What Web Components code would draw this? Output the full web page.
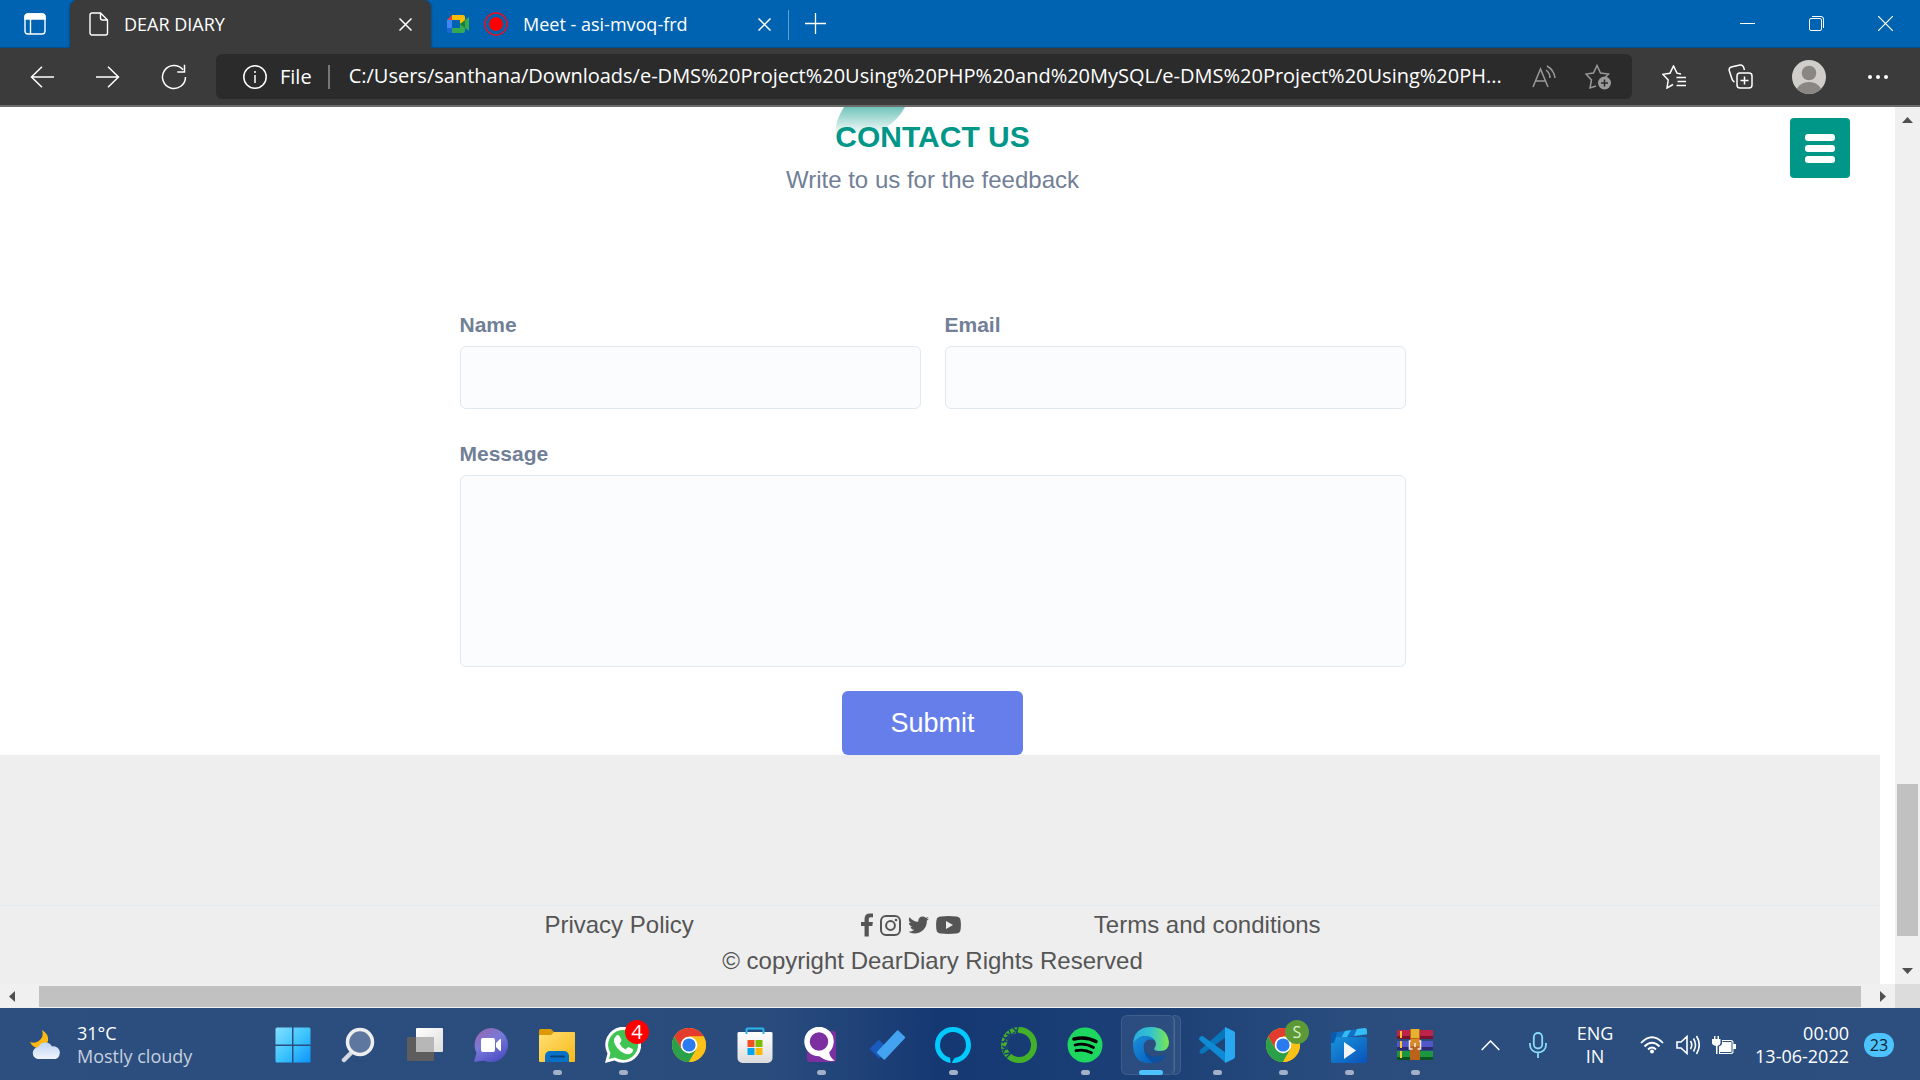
<!DOCTYPE html>
<html lang="en">
<head>
<meta charset="utf-8">
<meta name="viewport" content="width=device-width, initial-scale=1">
<title>DEAR DIARY</title>
<style>
  body {
    margin: 0;
    height: 100vh;
    display: flex;
    flex-direction: column;
    overflow: hidden;
    font-family: "Open Sans", "Noto Sans", sans-serif;
  }
  diary-page {
    flex: 1;
    min-height: 0;
  }
</style>
</head>
<body>
  <tab-strip>
    <browser-tab active label="DEAR DIARY">
      <svg slot="icon" width="20" height="24" viewBox="0 0 20 24" fill="none" stroke="#fff" stroke-width="1.4"><path d="M3 1h8.500l7 7v13a2 2 0 0 1-2 2H3a2 2 0 0 1-2-2V3a2 2 0 0 1 2-2zM11.500 1v5a2 2 0 0 0 2 2h5"/></svg>
    </browser-tab>
    <browser-tab label="Meet - asi-mvoq-frd">
      <svg slot="icon" width="22" height="18" viewBox="0 0 22 18"><path fill="#ea4335" d="M0 5l5-5v5z"/><path fill="#4285f4" d="M0 5h5v8H0z"/><path fill="#1967d2" d="M0 13h5v5H2a2 2 0 0 1-2-2z"/><path fill="#fbbc04" d="M5 0h11a2 2 0 0 1 2 2v5l-5 3V5H5z"/><path fill="#34a853" d="M5 13h8V8l5 3v5a2 2 0 0 1-2 2H5zM18 5l4-3v14l-4-3z"/><path fill="#188038" d="M13 9l5-4v8z"/></svg>
      <svg slot="icon" width="24" height="24" viewBox="0 0 24 24"><circle cx="12" cy="12" r="11" fill="none" stroke="#e8101c" stroke-width="1.500"/><circle cx="12" cy="12" r="7" fill="#f00"/></svg>
    </browser-tab>
  </tab-strip>
  <browser-toolbar></browser-toolbar>
  <diary-page>
    <contact-form></contact-form>
    <site-footer slot="footer">© copyright DearDiary Rights Reserved</site-footer>
  </diary-page>
  <task-bar>
    <task-app name="start"></task-app>
    <task-app name="search"></task-app>
    <task-app name="taskview"></task-app>
    <task-app name="chat"></task-app>
    <task-app name="explorer" running></task-app>
    <task-app name="whatsapp" running badge="4"></task-app>
    <task-app name="chrome"></task-app>
    <task-app name="store"></task-app>
    <task-app name="quora" running></task-app>
    <task-app name="todo"></task-app>
    <task-app name="alexa" running></task-app>
    <task-app name="anaconda"></task-app>
    <task-app name="spotify" running></task-app>
    <task-app name="edge" running focused></task-app>
    <task-app name="vscode" running></task-app>
    <task-app name="chrome" running profile="S"></task-app>
    <task-app name="movies" running></task-app>
    <task-app name="winrar" running></task-app>
  </task-bar>

<script>
class TabStrip extends HTMLElement {
  constructor() {
    super();
    this.attachShadow({ mode: "open" }).innerHTML = `
    <style>
      :host {
        display: flex;
        height: 48px;
        flex-shrink: 0;
        background: #0063b1;
        box-shadow: inset 0 -1px 1px #00508f;
      }
      button {
        border: 0;
        padding: 0;
        background: none;
        display: flex;
        align-items: center;
        justify-content: center;
      }
      .menu { width: 70px; }
      .divider {
        width: 1px;
        height: 30px;
        margin-top: 10px;
        background: #5fa0d4;
      }
      .add { width: 53px; height: 46px; }
      .window { display: flex; margin-left: auto; }
      .window button { width: 69px; height: 46px; }
    </style>
    <button class="menu" aria-label="Tab actions">
      <svg width="22" height="22" viewBox="0 0 22 22" fill="none" stroke="#fff" stroke-width="1.400"><rect x="1" y="1" width="20" height="20" rx="3"/><path d="M6.500 6v15"/><path fill="#fff" d="M1 6V4a3 3 0 0 1 3-3h14a3 3 0 0 1 3 3v2z"/></svg>
    </button>
    <slot></slot>
    <span class="divider"></span>
    <button class="add" aria-label="New tab">
      <svg width="21" height="21" viewBox="0 0 21 21" stroke="#fff" stroke-width="1.300"><path d="M10.500 0v21M0 10.500h21"/></svg>
    </button>
    <div class="window">
      <button aria-label="Minimize"><svg width="15" height="15" viewBox="0 0 15 15" stroke="#fff"><path d="M0 7.500h15"/></svg></button>
      <button aria-label="Restore"><svg width="15" height="15" viewBox="0 0 15 15" fill="none" stroke="#fff"><rect x=".5" y="2.500" width="12" height="12" rx="1.500"/><path d="M3 .5h9a2.500 2.500 0 0 1 2.500 2.500v9"/></svg></button>
      <button aria-label="Close"><svg width="15" height="15" viewBox="0 0 15 15" stroke="#fff" stroke-width="1.200"><path d="M0 0l15 15M15 0L0 15"/></svg></button>
    </div>`;
  }
}
customElements.define("tab-strip", TabStrip);

class BrowserTab extends HTMLElement {
  constructor() {
    super();
    this.attachShadow({ mode: "open" });
  }

  connectedCallback() {
    this.shadowRoot.innerHTML = `
    <style>
      :host {
        display: flex;
        align-items: center;
        gap: 15px;
        box-sizing: border-box;
        width: 357px;
        padding: 0 15px 0 16px;
        color: #fff;
        font-size: 18px;
      }
      :host([active]) {
        width: 361px;
        padding: 0 17px 0 19px;
        background: #3b3b3b;
        border-radius: 8px 8px 0 0;
        box-shadow: 0 0 3px #003c6e;
      }
      .title {
        flex: 1;
        white-space: nowrap;
        line-height: 24px;
      }
      button {
        border: 0;
        padding: 5px 2px;
        background: none;
        display: flex;
      }
    </style>
    <slot name="icon"></slot>
    <span class="title">${this.getAttribute("label")}</span>
    <button aria-label="Close tab">
      <svg width="13" height="13" viewBox="0 0 13 13" stroke="#fff" stroke-width="1.500"><path d="M.5.5l12 12M12.500.5l-12 12"/></svg>
    </button>`;
  }
}
customElements.define("browser-tab", BrowserTab);

class BrowserToolbar extends HTMLElement {
  constructor() {
    super();
    this.attachShadow({ mode: "open" }).innerHTML = `
    <style>
      :host {
        display: flex;
        align-items: center;
        height: 57px;
        flex-shrink: 0;
        padding: 0 9px;
        background: #3b3b3b;
        border-bottom: 2px solid #6b6b6b;
        color: #fff;
        font-size: 20px;
      }
      button {
        border: 0;
        padding: 0;
        width: 66px;
        height: 45px;
        background: none;
        display: flex;
        align-items: center;
        justify-content: center;
      }
      .profile { width: 72px; }
      .address {
        flex: 1;
        height: 45px;
        margin: 0 9px;
        display: flex;
        align-items: center;
        background: #2b2b2b;
        border-radius: 6px;
        padding-left: 27px;
        padding-right: 7px;
      }
      .address button { width: 54px; }
      .address .site {
        width: auto;
        gap: 13px;
        color: inherit;
        font: inherit;
      }
      .divider {
        width: 2px;
        height: 24px;
        margin: 0 19px 0 16px;
        background: #777;
      }
      input {
        flex: 1;
        min-width: 0;
        border: 0;
        padding: 0 0 2px;
        outline: 0;
        background: none;
        color: inherit;
        font: inherit;
      }
    </style>
    <button aria-label="Back"><svg width="24" height="22" viewBox="0 0 24 22" fill="none" stroke="#fff" stroke-width="1.500"><path d="M12 .7L1.500 11 12 21.300M1.500 11H24"/></svg></button>
    <button aria-label="Forward"><svg width="24" height="22" viewBox="0 0 24 22" fill="none" stroke="#fff" stroke-width="1.500"><path d="M12 .7L22.500 11 12 21.300M22.500 11H0"/></svg></button>
    <button aria-label="Refresh"><svg width="26" height="26" viewBox="0 0 26 26" fill="none" stroke="#fff" stroke-width="1.500"><path d="M24.500 13A11.500 11.500 0 1 1 22 5.800M23.500.8V8h-7.200"/></svg></button>
    <div class="address">
      <button class="site"><svg width="24" height="24" viewBox="0 0 24 24" fill="none" stroke="#fff" stroke-width="1.500"><circle cx="12" cy="12" r="11.200"/><path d="M12 10v8M12 6v2"/></svg>File</button>
      <span class="divider"></span>
      <input aria-label="Address" value="C:/Users/santhana/Downloads/e-DMS%20Project%20Using%20PHP%20and%20MySQL/e-DMS%20Project%20Using%20PH...">
      <button aria-label="Read aloud"><svg width="24" height="24" viewBox="0 0 24 24" fill="none" stroke="#9a9a9a" stroke-width="1.500"><path d="M1 22L8.500 4 16 22M3.700 16h9.600M14 5q4 3 4 8M15 1q7 4 8 12"/></svg></button>
      <button aria-label="Add to favorites"><svg width="26" height="26" viewBox="0 0 26 26" fill="none" stroke="#9a9a9a" stroke-width="1.500"><path d="M11 22l-6 2 1.500-8L1 10l7.500-1L12 1.500 15.500 9l8 1-3 3"/><circle cx="19.500" cy="19" r="6.500" fill="#9a9a9a" stroke="none"/><path stroke="#2b2b2b" d="M19.500 15.500v7M16 19h7"/></svg></button>
    </div>
    <button aria-label="Favorites"><svg width="24" height="24" viewBox="0 0 24 24" fill="none" stroke="#fff" stroke-width="1.500"><path d="M11 19.500l-6 3.500 1.200-8L.8 9.300 8 8.200 11.500 1 15 8.200l4 .8M14.500 12.500H24M15.500 16.500H24M14.500 20.500H24" /></svg></button>
    <button aria-label="Collections"><svg width="25" height="25" viewBox="0 0 25 25" fill="none" stroke="#fff" stroke-width="1.500"><rect x="9" y="9" width="15" height="15" rx="3"/><path d="M16.500 12.500v8M12.500 16.500h8M6.500 18Q4.500 17 4 15L1.200 6.500a3 3 0 0 1 2-3.500L12 1a3 3 0 0 1 3.500 2l1 3"/></svg></button>
    <button class="profile" aria-label="Profile"><svg width="34" height="34" viewBox="0 0 34 34"><defs><clipPath id="face"><circle cx="17" cy="17" r="17"/></clipPath></defs><g clip-path="url(#face)"><path fill="#d0cecb" d="M0 0h34v34H0z"/><circle cx="17" cy="13" r="7.300" fill="#8a8683"/><ellipse cx="17" cy="33" rx="13" ry="11" fill="#8a8683"/></g></svg></button>
    <button aria-label="Settings and more"><svg width="20" height="4" viewBox="0 0 20 4" fill="#fff"><circle cx="2" cy="2" r="2"/><circle cx="10" cy="2" r="2"/><circle cx="18" cy="2" r="2"/></svg></button>`;
  }
}
customElements.define("browser-toolbar", BrowserToolbar);

// scrolled viewport with both scrollbars
class DiaryPage extends HTMLElement {
  constructor() {
    super();
    this.attachShadow({ mode: "open" }).innerHTML = `
    <style>
      :host {
        display: grid;
        grid-template-columns: 1fr 25px;
        grid-template-rows: 1fr 24px;
        background: #fff;
        font-family: "Liberation Sans", Arial, sans-serif;
      }
      .view {
        position: relative;
        display: flex;
        flex-direction: column;
        min-height: 0;
        overflow: hidden;
      }
      .toggle {
        position: absolute;
        top: 11px;
        right: 45px;
        width: 60px;
        height: 60px;
        border: 0;
        border-radius: 4px;
        background: #009688;
        display: flex;
        flex-direction: column;
        align-items: center;
        justify-content: center;
        gap: 4px;
      }
      .toggle span {
        width: 30px;
        height: 7px;
        border-radius: 3px;
        background: #fff;
      }
      .bar {
        display: flex;
        align-items: center;
        justify-content: space-between;
        background: #f0f0f0;
      }
      .vertical { flex-direction: column; padding: 10px 0; }
      .horizontal { padding: 0 9px; }
      .vertical .track {
        flex: 1;
        width: 21px;
        display: flex;
        flex-direction: column;
        justify-content: flex-end;
        padding-bottom: 32px;
      }
      .vertical .thumb { height: 152px; background: #c1c1c1; }
      .horizontal .track { flex: 1; padding: 0 19px 0 24px; }
      .horizontal .thumb { height: 21px; background: #c1c1c1; }
      .corner { background: #dcdcdc; }
      svg { display: block; fill: #505050; }
    </style>
    <div class="view">
      <slot></slot>
      <slot name="footer"></slot>
      <button class="toggle" aria-label="Menu"><span></span><span></span><span></span></button>
    </div>
    <div class="bar vertical">
      <svg width="11" height="6"><path d="M0 6l5.500-6L11 6z"/></svg>
      <div class="track"><div class="thumb"></div></div>
      <svg width="11" height="6"><path d="M0 0l5.500 6L11 0z"/></svg>
    </div>
    <div class="bar horizontal">
      <svg width="6" height="11"><path d="M6 0L0 5.500 6 11z"/></svg>
      <div class="track"><div class="thumb"></div></div>
      <svg width="6" height="11"><path d="M0 0l6 5.500L0 11z"/></svg>
    </div>
    <div class="corner"></div>`;
  }
}
customElements.define("diary-page", DiaryPage);

class FormField extends HTMLElement {
  constructor() {
    super();
    this.attachShadow({ mode: "open" });
  }

  connectedCallback() {
    const label = this.getAttribute("label");
    const control = this.hasAttribute("multiline")
      ? `<textarea id="control"></textarea>`
      : `<input id="control" type="${this.getAttribute("type") || "text"}">`;

    this.shadowRoot.innerHTML = `
    <style>
      :host {
        display: flex;
        flex-direction: column;
        gap: 6px;
        flex: 1;
      }
      label {
        color: #718096;
        font-size: 21px;
        font-weight: bold;
        line-height: 30px;
      }
      input, textarea {
        box-sizing: border-box;
        width: 100%;
        height: 63px;
        margin: 0;
        padding: 12px;
        border: 1px solid #e2e8f0;
        border-radius: 6px;
        background: #fbfcfe;
        font: inherit;
        font-size: 24px;
        outline: 0;
        resize: none;
      }
      textarea { height: 192px; }
    </style>
    <label for="control">${label}</label>
    ${control}`;
  }
}
customElements.define("form-field", FormField);

class ContactForm extends HTMLElement {
  constructor() {
    super();
    this.attachShadow({ mode: "open" }).innerHTML = `
    <style>
      :host {
        display: block;
        padding: 12px 30px 0 0;
        text-align: center;
      }
      .heading { position: relative; }
      .leaf {
        position: absolute;
        top: -12px;
        left: 50%;
        margin-left: -98px;
      }
      h2 {
        position: relative;
        margin: 0;
        color: #009688;
        font-size: 30px;
        line-height: 36px;
      }
      p {
        margin: 7px 0 0;
        color: #718096;
        font-size: 24px;
        line-height: 36px;
      }
      form {
        max-width: 946px;
        margin: 112px auto 0;
        display: flex;
        flex-direction: column;
        text-align: left;
      }
      .row {
        display: flex;
        gap: 24px;
        margin-bottom: 30px;
      }
      button {
        align-self: center;
        margin-top: 24px;
        height: 64px;
        padding: 0 48px;
        border: 0;
        border-radius: 6px;
        background: #667eea;
        color: #fff;
        font: inherit;
        font-size: 27px;
      }
    </style>
    <div class="heading">
      <svg class="leaf" width="72" height="28" viewBox="0 0 72 28">
        <defs><linearGradient id="fade" x2="0" y2="1"><stop stop-color="#70c4bb"/><stop offset="1" stop-color="#70c4bb" stop-opacity="0"/></linearGradient></defs>
        <path fill="url(#fade)" d="M9 0h61Q56 25 28 28H0Q0 14 9 0z"/>
      </svg>
      <h2>CONTACT US</h2>
    </div>
    <p>Write to us for the feedback</p>
    <form>
      <div class="row">
        <form-field label="Name"></form-field>
        <form-field label="Email" type="email"></form-field>
      </div>
      <form-field label="Message" multiline></form-field>
      <button type="button">Submit</button>
    </form>`;
  }
}
customElements.define("contact-form", ContactForm);

class SiteFooter extends HTMLElement {
  constructor() {
    super();
    this.attachShadow({ mode: "open" }).innerHTML = `
    <style>
      :host {
        display: block;
        flex: 1;
        margin-right: 15px;
        padding-top: 150px;
        background: #eee;
        color: #555;
        font-size: 24px;
        line-height: 36px;
        text-align: center;
      }
      .inner {
        border-top: 1px solid #e2e8f0;
        padding: 1px 15px 0 0;
      }
      .links {
        display: flex;
        justify-content: center;
        gap: 133px;
      }
      a { color: inherit; text-decoration: none; }
      .policy { margin-right: 34px; }
      .social {
        display: flex;
        align-items: center;
        gap: 7px;
      }
      .social a, svg { display: block; }
      svg { fill: #555; }
    </style>
    <div class="inner">
      <div class="links">
        <a class="policy" href="#privacy">Privacy Policy</a>
        <div class="social">
          <a href="#facebook" aria-label="Facebook"><svg width="12" height="24" viewBox="479 0 864 1664"><path d="M1343 12v264h-157q-86 0-116 36t-30 108v189h293l-39 296h-254v759h-306v-759h-255v-296h255v-218q0-186 104-288.500t277-102.500q147 0 228 12z"/></svg></a>
          <a href="#instagram" aria-label="Instagram"><svg width="21" height="21" viewBox="0 0 21 21"><rect x="1" y="1" width="19" height="19" rx="5" fill="none" stroke="#555" stroke-width="2"/><circle cx="10.500" cy="10.500" r="4.400" fill="none" stroke="#555" stroke-width="2"/><circle cx="16" cy="5" r="1.300"/></svg></a>
          <a href="#twitter" aria-label="Twitter"><svg width="21" height="18" viewBox="108 256 1576 1280"><path d="M1684 408q-67 98-162 167 1 14 1 42 0 130-38 259.500t-115.500 248.500-184.500 210.500-258 146-323 54.500q-271 0-496-145 35 4 78 4 225 0 401-138-105-2-188-64.500t-114-159.500q33 5 61 5 43 0 85-11-112-23-185.500-111.500t-73.500-205.500v-4q68 38 146 41-66-44-105-115t-39-154q0-88 44-163 121 149 294.500 238.500t371.500 99.500q-8-38-8-74 0-134 94.500-228.500t228.500-94.500q140 0 236 102 109-21 205-78-37 115-142 178 93-10 186-50z"/></svg></a>
          <a href="#youtube" aria-label="YouTube"><svg width="25" height="18" viewBox="0 0 25 18"><path fill-rule="evenodd" d="M5 .4Q12.500-.3 20 .4q4 .2 4.500 3.600.8 5 0 10-.5 3.400-4.500 3.600-7.500.7-15 0-4-.2-4.500-3.600-.8-5 0-10Q1 .6 5 .4zM10 5v8l7-4z"/></svg></a>
        </div>
        <a href="#terms">Terms and conditions</a>
      </div>
      <slot></slot>
    </div>`;
  }
}
customElements.define("site-footer", SiteFooter);

const chrome = `<circle cx="18" cy="18" r="17" fill="#fbc116"/><path fill="#e33b2e" d="M3.300 9.500A17 17 0 0 1 32.700 9.500H18L10.600 22.200z"/><path fill="#2aa148" d="M3.300 9.500A17 17 0 0 0 18 35l7.400-12.800-7.400 4.300-7.400-4.200z"/><path fill="#fbc116" d="M18 9.500h14.700A17 17 0 0 1 18 35l7.400-12.800z"/><circle cx="18" cy="18" r="8.300" fill="#fff"/><circle cx="18" cy="18" r="6.600" fill="#2a7bef"/>`;

const icons = {
  start: `<defs><linearGradient id="a" x1="0" y1="0" x2="36" y2="36" gradientUnits="userSpaceOnUse"><stop stop-color="#86dfff"/><stop offset=".5" stop-color="#3fc5fd"/><stop offset="1" stop-color="#0a93fb"/></linearGradient></defs><path fill="url(#a)" d="M2 .5h15v17H.500V2A1.500 1.500 0 0 1 2 .5zM18.500.5H34A1.500 1.500 0 0 1 35.500 2v15.500h-17zM.5 19H17v16.500H2A1.500 1.500 0 0 1 .5 34zM18.500 19h17v15a1.500 1.500 0 0 1-1.500 1.500H18.500z"/>`,
  search: `<path stroke="#d4d9e0" stroke-width="4.500" stroke-linecap="round" d="M11 25l-8 8"/><circle cx="19" cy="15" r="12.500" fill="#5d779e" stroke="#eee" stroke-width="3.500"/>`,
  taskview: `<defs><linearGradient id="a" x2="1" y2="1"><stop stop-color="#fff"/><stop offset="1" stop-color="#ddd"/></linearGradient></defs><rect x="9" y="1" width="27" height="24" rx="1" fill="url(#a)"/><rect y="10" width="27" height="24" rx="1" fill="#5d5d5d"/><path fill="#b7b7b7" d="M9 10h18v15H9z"/>`,
  chat: `<defs><linearGradient id="a" x2=".6" y2="1"><stop stop-color="#9b65a8"/><stop offset=".5" stop-color="#7a79d8"/><stop offset="1" stop-color="#4f52c6"/></linearGradient></defs><path fill="url(#a)" d="M18 1a17 17 0 1 1-7 32.500L1 35l2.500-9A17 17 0 0 1 18 1z"/><rect x="8" y="11" width="14" height="14" rx="2" fill="#fff"/><path fill="#fff" d="M23 16l4-4q1-.5 1 1v10q0 1.500-1 1l-4-4z"/>`,
  explorer: `<defs><linearGradient id="a" x2="1" y2="1"><stop stop-color="#ffdf75"/><stop offset="1" stop-color="#f9b916"/></linearGradient></defs><path fill="#dc9805" d="M0 3.500A1.500 1.500 0 0 1 1.500 2H12l4 4v6H0z"/><path fill="url(#a)" d="M0 8h12l3-3h20a1 1 0 0 1 1 1v28a1 1 0 0 1-1 1H1a1 1 0 0 1-1-1z"/><path fill="#0871c7" d="M6 35v-6a5 5 0 0 1 5-5h14a5 5 0 0 1 5 5v6z"/><path stroke="#08427d" stroke-width="2" stroke-linecap="round" d="M12 29.500h13"/>`,
  whatsapp: `<path fill="#fff" d="M0 36l2.500-9.500A18 18 0 1 1 9.500 33.500z"/><path fill="#3fc351" d="M4 32l1.500-6A15 15 0 1 1 10 30.500z"/><path fill="#fff" d="M11 9q2-2 3.500 0l2 4q0 1.500-2 3.500 2 4 6 6 1.500-2 3-2.500l4 2q1.500 1 0 3-3 4-9 1Q11 22 9 15q-.5-3.500 2-6z"/>`,
  chrome,
  store: `<defs><linearGradient id="a" x2="0" y2="1"><stop stop-color="#fff"/><stop offset="1" stop-color="#dcdcdc"/></linearGradient></defs><path fill="url(#a)" d="M.5 6A1.500 1.500 0 0 1 2 5h32q1.500 0 1.500 1v25a5 5 0 0 1-5 5h-25a5 5 0 0 1-5-5z"/><path fill="none" stroke="#29b6ee" stroke-width="2" d="M9.500 7V2.500a1 1 0 0 1 1-1h15a1 1 0 0 1 1 1V7"/><path fill="#f25022" d="M10.500 13h7v7h-7z"/><path fill="#7fba00" d="M18.500 13h7v7h-7z"/><path fill="#00a4ef" d="M10.500 21h7v7h-7z"/><path fill="#ffb900" d="M18.500 21h7v7h-7z"/>`,
  quora: `<rect x="4" y="4" width="29" height="31" rx="3" fill="#7b2fa0"/><ellipse cx="16" cy="14.500" rx="12" ry="12" fill="#7b2fa0" stroke="#fff" stroke-width="5.500"/><path fill="#fff" d="M14 27q7 7 14 7l4-.5q-5-2-6-9z"/>`,
  todo: `<rect x="-4" y="-6.500" width="14" height="13" rx="1" fill="#185abd" transform="translate(8 20) rotate(45)"/><rect x="-5.500" y="-15.500" width="11" height="31" rx="1" fill="#43a3f0" transform="translate(22 18) rotate(43)"/>`,
  alexa: `<circle cx="18" cy="18" r="15.500" fill="none" stroke="#00cafe" stroke-width="5"/><path fill="#143870" d="M15 30.500h6q-3 1-4 5.500h-1.300z"/>`,
  anaconda: `<circle cx="18" cy="18" r="15" fill="none" stroke="#43b02a" stroke-width="6"/><path fill="none" stroke="#1c3f75" stroke-width="1.500" d="M17 0l-2 8M12 1l5 5M8 3l3 7M5 7l8 2M2 10l7 3M0 15l8-1M1 19l6 3M0 23l8-2M3 27l6-1M5 31l5-5M8 8L2 16M7 16L2 26M14 5L6 12"/>`,
  spotify: `<circle cx="18" cy="18" r="17.500" fill="#1ed760"/><path fill="none" stroke="#000" stroke-linecap="round" d="M7 12q12-3 22 2.500" stroke-width="3.600"/><path fill="none" stroke="#000" stroke-linecap="round" stroke-width="2.800" d="M8 18q10-2.500 18.500 2.500M9 23.700q8-2 15.500 2"/>`,
  edge: `<defs><linearGradient id="a" x1="0" x2="1"><stop stop-color="#2aabdf"/><stop offset=".5" stop-color="#33c3cf"/><stop offset="1" stop-color="#7be84c"/></linearGradient><linearGradient id="b" x2=".7" y2="1"><stop stop-color="#1c8fd9"/><stop offset="1" stop-color="#0766c4"/></linearGradient></defs><path fill="#0e50a0" d="M12 14q-4 8 2 13 8 5 19 1-4 8-13 8L8 31l-1-14z"/><path fill="url(#a)" d="M0 17Q1 0 18 0q16 0 18 15 0 9-9 9-8 0-5-4 3-5-3-9Q8 5 0 17z"/><path fill="url(#b)" d="M0 17q5-9 14-8 5 1 7 4-8-2-10 4-2 12 9 19Q0 38 0 17z"/>`,
  vscode: `<path fill="#0876ba" d="M1 26q-1-2 0-3L27 0v10L5 26q-2 1.500-4 0z"/><path fill="#0e8bd4" d="M1 10q2-2 4 0l22 16v10L.500 13q-1-1 .5-3z"/><path fill="#27a8f0" d="M26 0l8.500 4q1.500.8 1.500 2v24q0 1.200-1.500 2L26 36z"/>`,
  movies: `<defs><linearGradient id="a" x2="1" y2="1"><stop stop-color="#1795dc"/><stop offset="1" stop-color="#0a52ba"/></linearGradient></defs><path fill="#1272c7" d="M0 6l34-5q2 0 2 3v4L6 11 4 16H0z"/><path fill="#33bdf2" d="M14 4l6-1-4 7-6 1zM26 2l8-1q2 0 2 3v3l-13 2z"/><rect y="10" width="36" height="26" rx="2" fill="url(#a)"/><path fill="#085cb0" d="M0 6l6-1-1 5-2 6H0z"/><path fill="#f3f4f6" d="M13 15l12 8.500L13 32z"/>`,
  winrar: `<path fill="#bd2449" d="M0 3h36v9H0z"/><path fill="#7b112e" d="M0 9h36v3H0z"/><path fill="#5356c6" d="M0 14h36v8H0z"/><path fill="#2c2b72" d="M0 20h36v3H0z"/><path fill="#1c963f" d="M0 24h36v9H0z"/><path fill="#0b5422" d="M0 30h36v3H0z"/><path fill="#ffc42e" d="M3 4h2v7H3zM3 14h2v7H3zM3 24h2v7H3z"/><path fill="#bc631b" d="M13 2h10v31H13z"/><path fill="#e6b331" d="M14 2h8v9h-8z"/><path fill="#d98a25" d="M14 12h8v7h-8z"/><path fill="none" stroke="#e8e8e8" stroke-width="1.600" d="M14 14h-1.500v8h3M22 14h1.500v8h-3M18 16v4"/>`
};

class TaskApp extends HTMLElement {
  constructor() {
    super();
    this.attachShadow({ mode: "open" });
  }

  connectedCallback() {
    const name = this.getAttribute("name");
    const badge = this.getAttribute("badge");
    const profile = this.getAttribute("profile");

    this.shadowRoot.innerHTML = `
    <style>
      :host { display: block; }
      button {
        position: relative;
        display: flex;
        align-items: center;
        justify-content: center;
        width: 66px;
        height: 72px;
        border: 0;
        padding: 0;
        background: none;
        font: inherit;
      }
      .icon { position: relative; }
      .plate, .plate-back {
        position: absolute;
        top: 6px;
        height: 58px;
        border: 1px solid #ffffff18;
        border-radius: 6px;
        background: #ffffff12;
      }
      .plate { left: 3px; width: 52px; }
      .plate-back {
        left: 55px;
        width: 7px;
        border-left: 0;
        border-radius: 0 6px 6px 0;
      }
      .mark {
        position: absolute;
        bottom: 6px;
        left: 50%;
        width: 9px;
        height: 5px;
        margin-left: -4px;
        border-radius: 3px;
        background: #a2b0c8;
      }
      :host([focused]) .mark {
        width: 24px;
        margin-left: -12px;
        background: #4cc2ff;
      }
      .badge {
        position: absolute;
        top: 11px;
        right: 7px;
        width: 24px;
        height: 24px;
        border-radius: 50%;
        background: #f00;
        color: #fff;
        font-size: 20px;
        line-height: 24px;
        text-align: center;
      }
      .profile {
        background: #5c9a38;
        color: #dcefc9;
        font-size: 16px;
      }
    </style>
    <button aria-label="${name}">
      ${this.hasAttribute("focused") ? `<span class="plate-back"></span><span class="plate"></span>` : ""}
      <svg class="icon" width="36" height="36" viewBox="0 0 36 36" fill="none">${icons[name]}</svg>
      ${badge ? `<span class="badge">${badge}</span>` : ""}
      ${profile ? `<span class="badge profile">${profile}</span>` : ""}
      ${this.hasAttribute("running") ? `<span class="mark"></span>` : ""}
    </button>`;
  }
}
customElements.define("task-app", TaskApp);

class TaskBar extends HTMLElement {
  constructor() {
    super();
    this.attachShadow({ mode: "open" }).innerHTML = `
    <style>
      :host {
        display: flex;
        box-sizing: border-box;
        height: 72px;
        flex-shrink: 0;
        align-items: center;
        padding-top: 2px;
        background: linear-gradient(90deg, #2c4f80 0, #2a4c7d 40%, #153873 49%, #1c4076 60%, #2a4d7e 70%, #2c4f80 100%);
        color: #fff;
        font-size: 18px;
        line-height: 23px;
      }
      button {
        border: 0;
        padding: 0;
        background: none;
        color: inherit;
        font: inherit;
        display: flex;
        align-items: center;
        justify-content: center;
      }
      .weather {
        width: 260px;
        padding-left: 30px;
        box-sizing: border-box;
        justify-content: flex-start;
        gap: 15px;
        text-align: left;
      }
      .weather small { display: block; font-size: 18px; color: #c6d0de; }
      .apps { display: flex; }
      .tray {
        margin-left: auto;
        display: flex;
        align-items: center;
        padding-right: 26px;
      }
      .small { width: 48px; height: 48px; }
      .lang { width: 66px; text-align: center; }
      .status { width: 114px; gap: 12px; padding: 0 6px 0 12px; box-sizing: border-box; }
      .clock { text-align: right; margin-left: 13px; }
      .count {
        width: 30px;
        height: 24px;
        margin-left: 15px;
        border-radius: 12px;
        background: #4cc2ff;
        color: #12202c;
        font-size: 16px;
      }
    </style>
    <button class="weather">
      <svg width="32" height="30" viewBox="0 0 32 30"><defs><linearGradient id="c" x2="0" y2="1"><stop stop-color="#bfd4f5"/><stop offset="1" stop-color="#f0f4fb"/></linearGradient></defs><path fill="#fdb912" d="M12 0q7 4 6 11-2 7-9 7-6 0-9-6 6 2 10-2t2-10z"/><path fill="url(#c)" d="M9 29a6 6 0 0 1-.5-12A7.500 7.500 0 0 1 22 16.500 6.500 6.500 0 0 1 25.500 29z"/></svg>
      <span>31°C<small>Mostly cloudy</small></span>
    </button>
    <div class="apps"><slot></slot></div>
    <div class="tray">
      <button class="small" aria-label="Show hidden icons"><svg width="19" height="11" viewBox="0 0 19 11" fill="none" stroke="#fff" stroke-width="1.500"><path d="M.7 10L9.500 1l8.800 9"/></svg></button>
      <button class="small" aria-label="Microphone"><svg width="18" height="26" viewBox="0 0 18 26" fill="none" stroke="#88dcf6" stroke-width="1.800"><rect x="4.800" y="1" width="8.400" height="15.500" rx="4.200"/><path d="M1 11v2a8 7.500 0 0 0 16 0v-2M9 20.500V26"/></svg></button>
      <button class="lang">ENG<br>IN</button>
      <button class="status" aria-label="Network, volume and battery">
        <svg width="24" height="18" viewBox="0 0 24 18" fill="none" stroke="#fff" stroke-width="1.800"><path d="M1 7Q12-4.500 23 7M4.500 10.500q7.500-7.500 15 0M8 13.500q4-4 8 0"/><circle cx="12" cy="15.500" r="2" fill="#fff" stroke="none"/></svg>
        <svg width="24" height="20" viewBox="0 0 24 20" fill="none" stroke="#fff" stroke-width="1.600"><path d="M1 7h4l6-5.500v17L5 13H1zM14.500 6q2.500 4 0 8M17.500 3.500q4 6.500 0 13M20.500 1q5.500 9 0 18"/></svg>
        <svg width="24" height="19" viewBox="0 0 24 19" fill="#fff"><path d="M2 0h1.500v3h2V0H7v3h1.500v4q0 2-3 3v8H4v-8Q0 9 0 7V3h2z"/><path d="M10 4h9a2.500 2.500 0 0 1 2.500 2.500V8H24v5h-2.500v2.500A2.500 2.500 0 0 1 19 18H7v-7.500q3-1 3-3z"/><path fill="none" stroke="#2c4f80" d="M10.500 5.500H19q1 0 1 1v9q0 1-1 1H8"/></svg>
      </button>
      <button class="clock">00:00<br>13-06-2022</button>
      <button class="count">23</button>
    </div>`;
  }
}
customElements.define("task-bar", TaskBar);
</script>
</body>
</html>
